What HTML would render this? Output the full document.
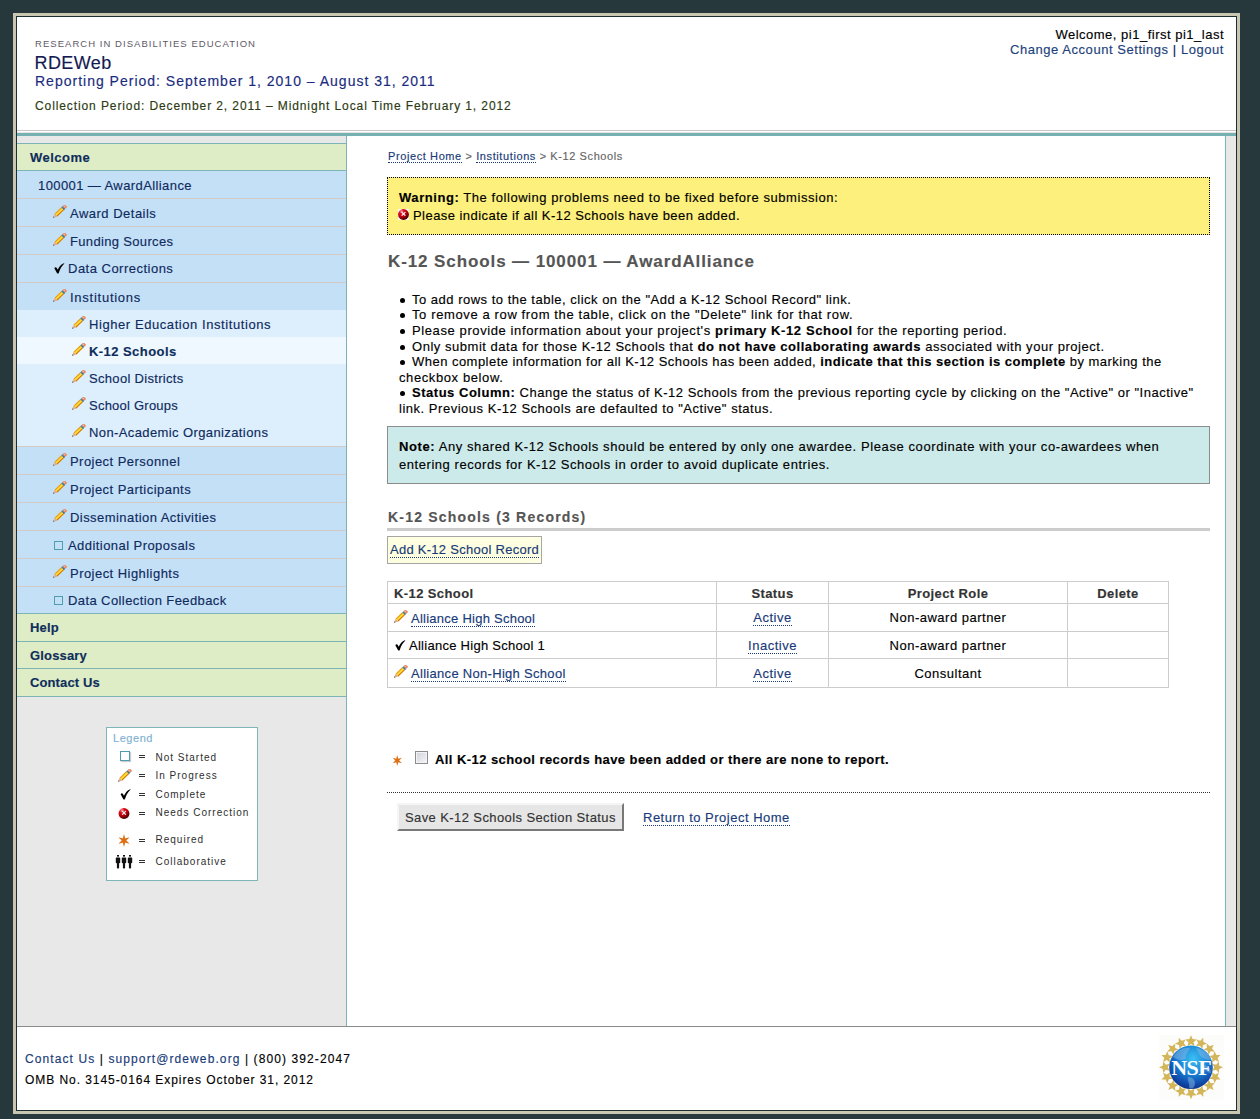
<!DOCTYPE html>
<html><head><meta charset="utf-8">
<style>
*{margin:0;padding:0;box-sizing:border-box}
html,body{width:1260px;height:1119px;overflow:hidden}
body{background:#26383c;font-family:"Liberation Sans",sans-serif;position:relative;color:#000;-webkit-text-stroke:0.15px}
.a{position:absolute;white-space:nowrap}
#frame{position:absolute;left:13px;top:13px;width:1227px;height:1101px;border:3px solid #c8c5b1}
#inner{position:absolute;left:16px;top:16px;width:1221px;height:1095px;border:1px solid #1b2e32;background:#fff}
.lnk{color:#183a78}
.dotu{border-bottom:1px dotted #183a78}
.tc{text-align:center}
.leg{position:absolute;white-space:nowrap;font-size:10px;color:#2e2e2e;letter-spacing:1px;-webkit-text-stroke:0}
.btn{background:#e6e6e6;border-top:2px solid #f5f5f5;border-left:2px solid #f5f5f5;border-right:2px solid #787878;border-bottom:2px solid #787878}
.nav{position:absolute;left:17px;width:329px}
.row{position:absolute;left:17px;width:329px;background:#c4e0f6}
.sep{position:absolute;left:17px;width:329px;height:1px;background:#d3ccc6}
.tsep{position:absolute;left:17px;width:329px;height:1px;background:#7db5b7}
.nt{position:absolute;white-space:nowrap;font-size:13px;color:#0f2a5e;letter-spacing:0.5px}
.nb{position:absolute;white-space:nowrap;font-size:13px;font-weight:bold;color:#0f2d5c;letter-spacing:0.3px}
</style></head>
<body>
<div id="frame"></div>
<div id="inner"></div>

<!-- header -->
<div class="a" style="left:35px;top:38px;font-size:9.5px;color:#5e5866;letter-spacing:1.04px;-webkit-text-stroke:0">RESEARCH IN DISABILITIES EDUCATION</div>
<div class="a" style="left:34.5px;top:53px;font-size:18px;color:#141a52;letter-spacing:0.4px">RDEWeb</div>
<div class="a" style="left:35px;top:73px;font-size:14px;color:#1a2b7e;letter-spacing:1px">Reporting Period: September 1, 2010 – August 31, 2011</div>
<div class="a" style="left:35px;top:99px;font-size:12px;color:#2b3a12;letter-spacing:0.9px">Collection Period: December 2, 2011 – Midnight Local Time February 1, 2012</div>
<div class="a" style="right:36px;top:27px;font-size:13px;color:#000;letter-spacing:0.5px">Welcome, pi1_first pi1_last</div>
<div class="a" style="right:36px;top:42px;font-size:13px;color:#1d3f7c;letter-spacing:0.55px">Change Account Settings <span style="color:#0f2050">|</span> Logout</div>

<!-- header bottom lines -->
<div class="a" style="left:17px;top:130px;width:1219px;height:1px;background:#c8c8c8"></div>
<div class="a" style="left:17px;top:132px;width:1219px;height:1px;background:#ebe3e3"></div>
<div class="a" style="left:17px;top:133px;width:1219px;height:3px;background:#75b1b3"></div>

<!-- left column -->
<div class="a" style="left:17px;top:136px;width:329px;height:890px;background:#e8e8e8"></div>
<div class="a" style="left:346px;top:136px;width:1px;height:890px;background:#7ab4b6"></div>
<!-- right strip -->
<div class="a" style="left:1225px;top:136px;width:1px;height:890px;background:#7ab4b6"></div>
<div class="a" style="left:1226px;top:136px;width:10px;height:890px;background:#e8e8e8"></div>
<!-- footer line -->
<div class="a" style="left:17px;top:1026px;width:1219px;height:1px;background:#8a8a8a"></div>

<svg width="0" height="0" style="position:absolute">
<defs>
<symbol id="pen" viewBox="0 0 14 14">
<g transform="translate(6.6 6.6) rotate(-43.4)">
<polygon points="-5,-1.9 -8.2,-0.5 -8.2,0.5 -5,1.9" fill="#dcb090"/>
<polygon points="-7.6,-0.75 -9.2,0 -7.6,0.75" fill="#5e5a58"/>
<rect x="-5" y="-1.9" width="9.2" height="3.8" fill="#f7c41c"/>
<rect x="-5" y="-1.9" width="9.2" height="0.9" fill="#e69520"/>
<rect x="-5" y="1" width="9.2" height="0.9" fill="#d06a08"/>
<rect x="-4.5" y="-0.5" width="8.4" height="0.9" fill="#ffe54e"/>
<rect x="4.2" y="-1.9" width="1.7" height="3.8" fill="#2b6581"/>
<rect x="4.6" y="-1" width="0.8" height="1.2" fill="#79b4d0"/>
<rect x="5.9" y="-1.9" width="2.8" height="3.8" rx="0.9" fill="#ec8460"/>
<rect x="6.3" y="-1" width="1.5" height="1" fill="#f8c0a8"/>
</g>
</symbol>
<symbol id="chk" viewBox="0 0 12 12">
<path d="M0.4,5.6 C1,4.6 2.4,4.4 3,5.4 L4,7.3 C5.6,4.3 7.6,1.6 10.8,0.3 C11.3,0.2 11.5,0.6 11.1,0.9 C8.7,3.1 6.6,6.4 5.2,10.8 C4.8,11.6 3.6,11.7 3.2,10.9 Z" fill="#000"/>
</symbol>
<radialGradient id="rg" cx="0.32" cy="0.22" r="0.85"><stop offset="0" stop-color="#f4a0a8"/><stop offset="0.25" stop-color="#e01020"/><stop offset="0.6" stop-color="#b00008"/><stop offset="1" stop-color="#2a0000"/></radialGradient>
<symbol id="err" viewBox="0 0 11 11">
<rect width="11" height="11" fill="#fbf6f4"/>
<circle cx="5.5" cy="5.5" r="5.4" fill="url(#rg)"/>
<path d="M4,3.4 L7,6.4 M7,3.4 L4,6.4" stroke="#fff" stroke-width="1.3" stroke-linecap="round" opacity="0.92"/>
</symbol>
<symbol id="ast" viewBox="0 0 10 11">
<g fill="#dd6f14" transform="translate(5 5.5)">
<polygon points="0,-5.4 1.5,0 0,5.4 -1.5,0"/>
<polygon points="0,-5.4 1.5,0 0,5.4 -1.5,0" transform="rotate(60)"/>
<polygon points="0,-5.4 1.5,0 0,5.4 -1.5,0" transform="rotate(-60)"/>
</g>
</symbol>
<symbol id="ppl" viewBox="0 0 18 14">
<g fill="#111">
<rect x="2" y="0" width="2" height="1.6"/><rect x="0.8" y="2.4" width="4.4" height="5.6" rx="0.6"/><rect x="1.9" y="7.5" width="2.2" height="6" rx="0.8"/>
<rect x="8" y="0" width="2" height="1.6"/><rect x="6.8" y="2.4" width="4.4" height="5.6" rx="0.6"/><rect x="7.9" y="7.5" width="2.2" height="6" rx="0.8"/>
<rect x="14" y="0" width="2" height="1.6"/><rect x="12.8" y="2.4" width="4.4" height="5.6" rx="0.6"/><rect x="13.9" y="7.5" width="2.2" height="6" rx="0.8"/>
</g>
</symbol>
</defs></svg>
<div class="a" style="left:17px;top:143px;width:329px;height:1px;background:#7db5b7;"></div>
<div class="a" style="left:17px;top:144px;width:329px;height:26px;background:#deedc5;"></div>
<div class="nb" style="left:30px;top:150px;letter-spacing:0.486px;">Welcome</div>
<div class="a" style="left:17px;top:170px;width:329px;height:1px;background:#7db5b7;"></div>
<div class="a" style="left:17px;top:171px;width:329px;height:275px;background:#c4e0f6;"></div>
<div class="nt" style="left:38px;top:178px;letter-spacing:0.405px;">100001 — AwardAlliance</div>
<div class="a" style="left:17px;top:198px;width:329px;height:1px;background:#d3ccc6;"></div>
<div class="a" style="left:17px;top:226px;width:329px;height:1px;background:#d3ccc6;"></div>
<div class="a" style="left:17px;top:254px;width:329px;height:1px;background:#d3ccc6;"></div>
<div class="a" style="left:17px;top:282px;width:329px;height:1px;background:#d3ccc6;"></div>
<svg class="a" width="14" height="14" style="left:53px;top:205px"><use href="#pen"/></svg>
<div class="nt" style="left:70px;top:206px;letter-spacing:0.492px;">Award Details</div>
<svg class="a" width="14" height="14" style="left:53px;top:233px"><use href="#pen"/></svg>
<div class="nt" style="left:70px;top:234px;letter-spacing:0.333px;">Funding Sources</div>
<svg class="a" width="11" height="11" style="left:54px;top:263px"><use href="#chk"/></svg>
<div class="nt" style="left:68px;top:261px;letter-spacing:0.488px;">Data Corrections</div>
<svg class="a" width="14" height="14" style="left:53px;top:289px"><use href="#pen"/></svg>
<div class="nt" style="left:70px;top:290px;letter-spacing:0.742px;">Institutions</div>
<div class="a" style="left:17px;top:310px;width:329px;height:136px;background:#ddeffc;"></div>
<div class="a" style="left:17px;top:337px;width:329px;height:27px;background:#eef8fe;"></div>
<svg class="a" width="14" height="14" style="left:72px;top:316px"><use href="#pen"/></svg>
<div class="nt" style="left:89px;top:317px;letter-spacing:0.572px;">Higher Education Institutions</div>
<svg class="a" width="14" height="14" style="left:72px;top:343px"><use href="#pen"/></svg>
<div class="nb" style="left:89px;top:344px;letter-spacing:0.442px;">K-12 Schools</div>
<svg class="a" width="14" height="14" style="left:72px;top:370px"><use href="#pen"/></svg>
<div class="nt" style="left:89px;top:371px;letter-spacing:0.312px;">School Districts</div>
<svg class="a" width="14" height="14" style="left:72px;top:397px"><use href="#pen"/></svg>
<div class="nt" style="left:89px;top:398px;letter-spacing:0.231px;">School Groups</div>
<svg class="a" width="14" height="14" style="left:72px;top:424px"><use href="#pen"/></svg>
<div class="nt" style="left:89px;top:425px;letter-spacing:0.392px;">Non-Academic Organizations</div>
<div class="a" style="left:17px;top:446px;width:329px;height:167px;background:#c4e0f6;"></div>
<div class="a" style="left:17px;top:446px;width:329px;height:1px;background:#d3ccc6;"></div>
<div class="a" style="left:17px;top:474px;width:329px;height:1px;background:#d3ccc6;"></div>
<div class="a" style="left:17px;top:502px;width:329px;height:1px;background:#d3ccc6;"></div>
<div class="a" style="left:17px;top:530px;width:329px;height:1px;background:#d3ccc6;"></div>
<div class="a" style="left:17px;top:558px;width:329px;height:1px;background:#d3ccc6;"></div>
<div class="a" style="left:17px;top:586px;width:329px;height:1px;background:#d3ccc6;"></div>
<svg class="a" width="14" height="14" style="left:53px;top:453px"><use href="#pen"/></svg>
<div class="nt" style="left:70px;top:454px;letter-spacing:0.453px;">Project Personnel</div>
<svg class="a" width="14" height="14" style="left:53px;top:481px"><use href="#pen"/></svg>
<div class="nt" style="left:70px;top:482px;letter-spacing:0.455px;">Project Participants</div>
<svg class="a" width="14" height="14" style="left:53px;top:509px"><use href="#pen"/></svg>
<div class="nt" style="left:70px;top:510px;letter-spacing:0.442px;">Dissemination Activities</div>
<div class="a" style="left:54px;top:541px;width:9px;height:9px;border:1px solid #4f9dae"></div>
<div class="nt" style="left:68px;top:538px;letter-spacing:0.44px;">Additional Proposals</div>
<svg class="a" width="14" height="14" style="left:53px;top:565px"><use href="#pen"/></svg>
<div class="nt" style="left:70px;top:566px;letter-spacing:0.456px;">Project Highlights</div>
<div class="a" style="left:54px;top:596px;width:9px;height:9px;border:1px solid #4f9dae"></div>
<div class="nt" style="left:68px;top:593px;letter-spacing:0.408px;">Data Collection Feedback</div>
<div class="a" style="left:17px;top:613px;width:329px;height:1px;background:#7db5b7;"></div>
<div class="a" style="left:17px;top:614px;width:329px;height:82px;background:#deedc5;"></div>
<div class="a" style="left:17px;top:641px;width:329px;height:1px;background:#7db5b7;"></div>
<div class="a" style="left:17px;top:668px;width:329px;height:1px;background:#7db5b7;"></div>
<div class="a" style="left:17px;top:696px;width:329px;height:1px;background:#7db5b7;"></div>
<div class="nb" style="left:30px;top:620px;letter-spacing:0.175px;">Help</div>
<div class="nb" style="left:30px;top:648px;letter-spacing:0.163px;">Glossary</div>
<div class="nb" style="left:30px;top:675px;letter-spacing:0.11px;">Contact Us</div>
<!-- ===== MAIN CONTENT ===== -->
<div class="a" style="left:388px;top:150px;font-size:11px;color:#666;letter-spacing:0.6px"><span class="lnk dotu">Project Home</span> &gt; <span class="lnk dotu">Institutions</span> &gt; K-12 Schools</div>

<div class="a" style="left:387px;top:177px;width:823px;height:58px;border:1px dotted #000;background:#fdf07d"></div>
<div class="a" style="left:399px;top:190px;font-size:13px;letter-spacing:0.56px"><b>Warning:</b> The following problems need to be fixed before submission:</div>
<svg class="a" width="11" height="11" style="left:398px;top:209px"><use href="#err"/></svg>
<div class="a" style="left:413px;top:208px;font-size:13px;letter-spacing:0.45px">Please indicate if all K-12 Schools have been added.</div>

<div class="a" style="left:388px;top:252px;font-size:17px;font-weight:bold;color:#555;letter-spacing:0.9px">K-12 Schools — 100001 — AwardAlliance</div>

<div class="a" style="left:399.5px;top:297.5px;width:5px;height:5px;border-radius:50%;background:#000"></div>
<div class="a" style="left:412px;top:292px;font-size:13px;letter-spacing:0.5px">To add rows to the table, click on the "Add a K-12 School Record" link.</div>
<div class="a" style="left:399.5px;top:312.5px;width:5px;height:5px;border-radius:50%;background:#000"></div>
<div class="a" style="left:412px;top:307px;font-size:13px;letter-spacing:0.62px">To remove a row from the table, click on the "Delete" link for that row.</div>
<div class="a" style="left:399.5px;top:328.5px;width:5px;height:5px;border-radius:50%;background:#000"></div>
<div class="a" style="left:412px;top:323px;font-size:13px;letter-spacing:0.6px">Please provide information about your project's <b>primary K-12 School</b> for the reporting period.</div>
<div class="a" style="left:399.5px;top:344.5px;width:5px;height:5px;border-radius:50%;background:#000"></div>
<div class="a" style="left:412px;top:339px;font-size:13px;letter-spacing:0.53px">Only submit data for those K-12 Schools that <b>do not have collaborating awards</b> associated with your project.</div>
<div class="a" style="left:399.5px;top:359.5px;width:5px;height:5px;border-radius:50%;background:#000"></div>
<div class="a" style="left:412px;top:354px;font-size:13px;letter-spacing:0.47px">When complete information for all K-12 Schools has been added, <b>indicate that this section is complete</b> by marking the</div>
<div class="a" style="left:399px;top:370px;font-size:13px;letter-spacing:0.6px">checkbox below.</div>
<div class="a" style="left:399.5px;top:390.5px;width:5px;height:5px;border-radius:50%;background:#000"></div>
<div class="a" style="left:412px;top:385px;font-size:13px;letter-spacing:0.52px"><b>Status Column:</b> Change the status of K-12 Schools from the previous reporting cycle by clicking on the "Active" or "Inactive"</div>
<div class="a" style="left:399px;top:401px;font-size:13px;letter-spacing:0.52px">link. Previous K-12 Schools are defaulted to "Active" status.</div>

<div class="a" style="left:387px;top:426px;width:823px;height:58px;border:1px solid #8c8c8c;background:#cdeaea"></div>
<div class="a" style="left:399px;top:439px;font-size:13px;letter-spacing:0.59px"><b>Note:</b> Any shared K-12 Schools should be entered by only one awardee. Please coordinate with your co-awardees when</div>
<div class="a" style="left:399px;top:457px;font-size:13px;letter-spacing:0.55px">entering records for K-12 Schools in order to avoid duplicate entries.</div>

<div class="a" style="left:388px;top:509px;font-size:14px;font-weight:bold;color:#555;letter-spacing:1.2px">K-12 Schools (3 Records)</div>
<div class="a" style="left:387px;top:528px;width:823px;height:3px;background:#cccccc"></div>

<div class="a" style="left:387px;top:536px;width:155px;height:28px;border:1px solid #a6a6a6;background:#fefee0"></div>
<div class="a" style="left:390px;top:542px;font-size:13px;letter-spacing:0.27px"><span class="lnk dotu">Add K-12 School Record</span></div>

<!-- table -->
<div class="a" style="left:387px;top:581px;width:782px;height:107px;border:1px solid #cccccc"></div>
<div class="a" style="left:388px;top:603px;width:780px;height:1px;background:#cccccc"></div>
<div class="a" style="left:388px;top:631px;width:780px;height:1px;background:#cccccc"></div>
<div class="a" style="left:388px;top:658px;width:780px;height:1px;background:#cccccc"></div>
<div class="a" style="left:716px;top:582px;width:1px;height:105px;background:#cccccc"></div>
<div class="a" style="left:828px;top:582px;width:1px;height:105px;background:#cccccc"></div>
<div class="a" style="left:1067px;top:582px;width:1px;height:105px;background:#cccccc"></div>
<div class="a" style="left:394px;top:586px;font-size:13px;font-weight:bold;color:#333;letter-spacing:0.4px">K-12 School</div>
<div class="a tc" style="left:717px;width:111px;top:586px;font-size:13px;font-weight:bold;color:#333;letter-spacing:0.4px">Status</div>
<div class="a tc" style="left:829px;width:238px;top:586px;font-size:13px;font-weight:bold;color:#333;letter-spacing:0.4px">Project Role</div>
<div class="a tc" style="left:1068px;width:100px;top:586px;font-size:13px;font-weight:bold;color:#333;letter-spacing:0.4px">Delete</div>

<svg class="a" width="14" height="14" style="left:394px;top:610px"><use href="#pen"/></svg>
<div class="a" style="left:411px;top:611px;font-size:13px;letter-spacing:0.25px"><span class="lnk dotu">Alliance High School</span></div>
<div class="a tc" style="left:717px;width:111px;top:610px;font-size:13px;letter-spacing:0.5px"><span class="lnk dotu">Active</span></div>
<div class="a tc" style="left:829px;width:238px;top:610px;font-size:13px;letter-spacing:0.5px">Non-award partner</div>

<svg class="a" width="11" height="11" style="left:395px;top:640px"><use href="#chk"/></svg>
<div class="a" style="left:409px;top:638px;font-size:13px;letter-spacing:0.27px">Alliance High School 1</div>
<div class="a tc" style="left:717px;width:111px;top:638px;font-size:13px;letter-spacing:0.5px"><span class="lnk dotu">Inactive</span></div>
<div class="a tc" style="left:829px;width:238px;top:638px;font-size:13px;letter-spacing:0.5px">Non-award partner</div>

<svg class="a" width="14" height="14" style="left:394px;top:665px"><use href="#pen"/></svg>
<div class="a" style="left:411px;top:666px;font-size:13px;letter-spacing:0.3px"><span class="lnk dotu">Alliance Non-High School</span></div>
<div class="a tc" style="left:717px;width:111px;top:666px;font-size:13px;letter-spacing:0.5px"><span class="lnk dotu">Active</span></div>
<div class="a tc" style="left:829px;width:238px;top:666px;font-size:13px;letter-spacing:0.5px">Consultant</div>

<!-- checkbox row -->
<svg class="a" width="10.5" height="11" style="left:392px;top:755px"><use href="#ast"/></svg>
<div class="a" style="left:415px;top:751px;width:13px;height:13px;border:1px solid #8c8c8c;box-shadow:inset 0 0 0 1px #f4f4f4;background:linear-gradient(135deg,#cdd1da,#f6f7f9)"></div>
<div class="a" style="left:435px;top:752px;font-size:13px;font-weight:bold;letter-spacing:0.43px">All K-12 school records have been added or there are none to report.</div>

<div class="a" style="left:387px;top:792px;width:823px;height:1px;border-top:1px dotted #333"></div>

<div class="a btn" style="left:397px;top:803px;width:227px;height:28px"></div>
<div class="a" style="left:405px;top:810px;font-size:13px;color:#333;letter-spacing:0.4px">Save K-12 Schools Section Status</div>
<div class="a" style="left:643px;top:810px;font-size:13px;letter-spacing:0.5px"><span class="lnk dotu">Return to Project Home</span></div>

<!-- legend -->
<div class="a" style="left:106px;top:727px;width:152px;height:154px;border:1px solid #7fb6b8;background:#fff"></div>
<div class="a" style="left:113px;top:732px;font-size:11px;color:#7fb0d2;letter-spacing:0.55px">Legend</div>
<div class="a" style="left:120px;top:751px;width:9.5px;height:9.5px;border:1.5px solid #4e9cae;box-shadow:1px 1px 1px #ccc"></div>
<svg class="a" width="14" height="14" style="left:118px;top:769px"><use href="#pen"/></svg>
<svg class="a" width="11.5" height="11" style="left:119.5px;top:789px"><use href="#chk"/></svg>
<svg class="a" width="12" height="11" style="left:118px;top:808px"><use href="#err"/></svg>
<svg class="a" width="12" height="13" style="left:118px;top:834px"><use href="#ast"/></svg>
<svg class="a" width="18" height="14" style="left:115px;top:855px"><use href="#ppl"/></svg>
<div class="leg" style="left:155.5px;top:751.5px">Not Started</div>
<div class="leg" style="left:155.5px;top:770.0px">In Progress</div>
<div class="leg" style="left:155.5px;top:788.5px">Complete</div>
<div class="leg" style="left:155.5px;top:807.0px">Needs Correction</div>
<div class="leg" style="left:155.5px;top:834.3px">Required</div>
<div class="leg" style="left:155.5px;top:855.6px">Collaborative</div>

<div class="a" style="left:139px;top:755px;width:6px;height:1px;background:#333"></div><div class="a" style="left:139px;top:757px;width:6px;height:1px;background:#333"></div>
<div class="a" style="left:139px;top:774px;width:6px;height:1px;background:#333"></div><div class="a" style="left:139px;top:776px;width:6px;height:1px;background:#333"></div>
<div class="a" style="left:139px;top:793px;width:6px;height:1px;background:#333"></div><div class="a" style="left:139px;top:795px;width:6px;height:1px;background:#333"></div>
<div class="a" style="left:139px;top:812px;width:6px;height:1px;background:#333"></div><div class="a" style="left:139px;top:814px;width:6px;height:1px;background:#333"></div>
<div class="a" style="left:139px;top:839px;width:6px;height:1px;background:#333"></div><div class="a" style="left:139px;top:841px;width:6px;height:1px;background:#333"></div>
<div class="a" style="left:139px;top:860px;width:6px;height:1px;background:#333"></div><div class="a" style="left:139px;top:862px;width:6px;height:1px;background:#333"></div>
<!-- footer -->
<div class="a" style="left:25px;top:1052px;font-size:12px;letter-spacing:1.1px"><span class="lnk">Contact Us</span> | <span class="lnk">support@rdeweb.org</span> | (800) 392-2047</div>
<div class="a" style="left:25px;top:1073px;font-size:12px;letter-spacing:0.94px">OMB No. 3145-0164 Expires October 31, 2012</div>
<!-- nsf -->
<svg class="a" width="65" height="65" viewBox="0 0 65 65" style="left:1159px;top:1035px">
<defs><radialGradient id="glb" cx="0.55" cy="0.3" r="0.75"><stop offset="0" stop-color="#3cc0f4"/><stop offset="0.45" stop-color="#1a86d6"/><stop offset="0.8" stop-color="#1048a8"/><stop offset="1" stop-color="#0a2a7a"/></radialGradient></defs>
<rect width="65" height="65" fill="#fcfcfa"/>
<g fill="#d4b65a"><polygon points="32.00,0.30 33.59,4.12 37.71,4.45 34.57,7.13 35.53,11.15 32.00,9.00 28.47,11.15 29.43,7.13 26.29,4.45 30.41,4.12"/><polygon points="44.25,2.74 44.25,6.87 47.93,8.75 44.00,10.03 43.35,14.11 40.92,10.77 36.83,11.41 39.26,8.07 37.39,4.38 41.32,5.65"/><polygon points="54.63,9.67 53.05,13.49 55.73,16.64 51.61,16.32 49.45,19.84 48.48,15.82 44.46,14.85 47.98,12.69 47.66,8.57 50.81,11.25"/><polygon points="61.56,20.05 58.65,22.98 59.92,26.91 56.23,25.04 52.89,27.47 53.53,23.38 50.19,20.95 54.27,20.30 55.55,16.37 57.43,20.05"/><polygon points="64.00,32.30 60.18,33.89 59.85,38.01 57.17,34.87 53.15,35.83 55.30,32.30 53.15,28.77 57.17,29.73 59.85,26.59 60.18,30.71"/><polygon points="61.56,44.55 57.43,44.55 55.55,48.23 54.27,44.30 50.19,43.65 53.53,41.22 52.89,37.13 56.23,39.56 59.92,37.69 58.65,41.62"/><polygon points="54.63,54.93 50.81,53.35 47.66,56.03 47.98,51.91 44.46,49.75 48.48,48.78 49.45,44.76 51.61,48.28 55.73,47.96 53.05,51.11"/><polygon points="44.25,61.86 41.32,58.95 37.39,60.22 39.26,56.53 36.83,53.19 40.92,53.83 43.35,50.49 44.00,54.57 47.93,55.85 44.25,57.73"/><polygon points="32.00,64.30 30.41,60.48 26.29,60.15 29.43,57.47 28.47,53.45 32.00,55.60 35.53,53.45 34.57,57.47 37.71,60.15 33.59,60.48"/><polygon points="19.75,61.86 19.75,57.73 16.07,55.85 20.00,54.57 20.65,50.49 23.08,53.83 27.17,53.19 24.74,56.53 26.61,60.22 22.68,58.95"/><polygon points="9.37,54.93 10.95,51.11 8.27,47.96 12.39,48.28 14.55,44.76 15.52,48.78 19.54,49.75 16.02,51.91 16.34,56.03 13.19,53.35"/><polygon points="2.44,44.55 5.35,41.62 4.08,37.69 7.77,39.56 11.11,37.13 10.47,41.22 13.81,43.65 9.73,44.30 8.45,48.23 6.57,44.55"/><polygon points="0.00,32.30 3.82,30.71 4.15,26.59 6.83,29.73 10.85,28.77 8.70,32.30 10.85,35.83 6.83,34.87 4.15,38.01 3.82,33.89"/><polygon points="2.44,20.05 6.57,20.05 8.45,16.37 9.73,20.30 13.81,20.95 10.47,23.38 11.11,27.47 7.77,25.04 4.08,26.91 5.35,22.98"/><polygon points="9.37,9.67 13.19,11.25 16.34,8.57 16.02,12.69 19.54,14.85 15.52,15.82 14.55,19.84 12.39,16.32 8.27,16.64 10.95,13.49"/><polygon points="19.75,2.74 22.68,5.65 26.61,4.38 24.74,8.07 27.17,11.41 23.08,10.77 20.65,14.11 20.00,10.03 16.07,8.75 19.75,6.87"/></g>
<circle cx="32" cy="32.3" r="21.8" fill="url(#glb)"/>
<path d="M14,22 C18,15 25,12 31,13 C29,17 26,19 27,24 C23,26 18,25 14,22 Z M37,13 C45,14 50,19 52,25 C47,25 42,23 40,19 Z M29,42 C34,42 38,46 35,52 C33,54 31,54 30,52 C31,49 28,45 29,42 Z M44,30 C48,30 52,33 52,38 C49,38 45,35 44,30 Z" fill="#8ab8e6" opacity="0.5"/>
<text x="32.2" y="39.5" text-anchor="middle" font-family="Liberation Serif" font-weight="bold" font-size="22" fill="#fff" letter-spacing="-0.6" style="-webkit-text-stroke:0">NSF</text>
</svg>

</body></html>
